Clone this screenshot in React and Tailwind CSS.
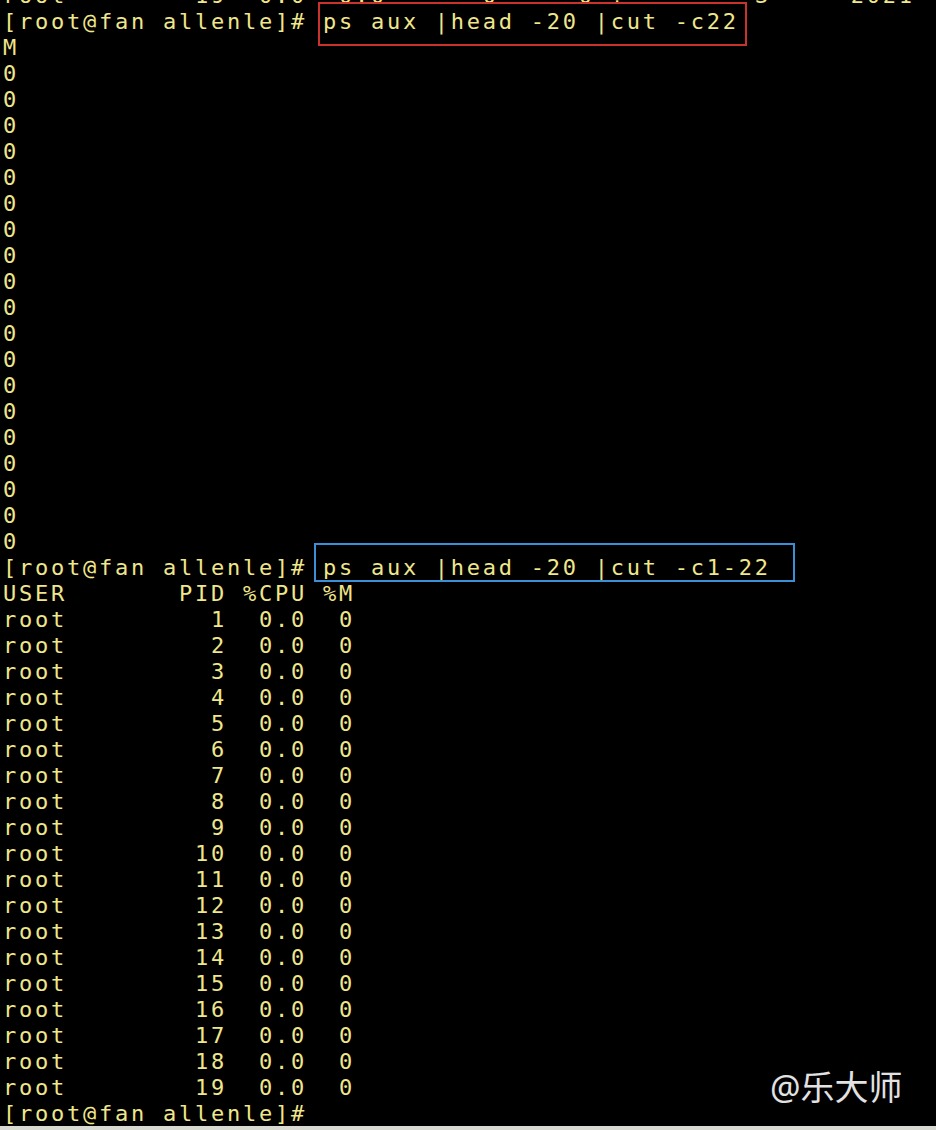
import React from "react";

// column helper: place pieces at fixed character columns
function cols(parts) {
  let s = "";
  for (const [col, text] of parts) {
    s = s.padEnd(col, " ") + text;
  }
  return s;
}

const zeros = Array.from({ length: 19 }, () => "0");

const rows = Array.from({ length: 19 }, (_, i) =>
  cols([
    [0, "root"],
    [i + 1 < 10 ? 13 : 12, String(i + 1)],
    [16, "0.0"],
    [21, "0"],
  ])
);

const topRow = cols([
  [0, "root"],
  [12, "19"],
  [16, "0.0"],
  [21, "0.0"],
  [30, "0"],
  [36, "0"],
  [38, "?"],
  [47, "S"],
  [53, "2021"],
]);

const PROMPT = "[root@fan allenle]# ";

function Line({ children }) {
  return <div className="h-[26px] leading-[26px] whitespace-pre">{children}</div>;
}

function Boxed({ children, color, box }) {
  return (
    <span className="relative inline-block">
      {children}
      <span className={`pointer-events-none absolute border-2 ${color} ${box}`} />
    </span>
  );
}

export default function App() {
  return (
    <div className="flex h-[1130px] w-[936px] flex-col overflow-hidden bg-black">
      <div
        className="relative flex-1 overflow-hidden pl-[3px] text-[22px] tracking-[2.75px] text-[#f0e68a]"
        style={{ fontFamily: '"DejaVu Sans Mono", "Liberation Mono", monospace' }}
      >
        <div className="-mt-[17px]">
          <Line>{topRow}</Line>
          <Line>
            {PROMPT}
            <Boxed color="border-[#c9332b]" box="-left-[5px] -right-[8px] -top-[7px] -bottom-[11px]">
              ps aux |head -20 |cut -c22
            </Boxed>
          </Line>
          <Line>M</Line>
          {zeros.map((z, i) => (
            <Line key={i}>{z}</Line>
          ))}
          <Line>
            {PROMPT}
            <Boxed color="border-[#3b8fd6]" box="-left-[9px] -right-[24px] -top-[12px] -bottom-[1px]">
              ps aux |head -20 |cut -c1-22
            </Boxed>
          </Line>
          <Line>{cols([[0, "USER"], [11, "PID"], [15, "%CPU"], [20, "%M"]])}</Line>
          {rows.map((r, i) => (
            <Line key={i}>{r}</Line>
          ))}
          <Line>[root@fan allenle]#</Line>
        </div>
        <div
          className="absolute left-[770px] top-[1067px] text-[34px] leading-[40px] tracking-normal text-[#e2e2e2]"
          style={{ fontFamily: '"Noto Sans", "Noto Sans CJK SC", sans-serif' }}
        >
          @乐大师
        </div>
      </div>
      <div className="h-[4px] bg-[#d8d9d0]" />
    </div>
  );
}
